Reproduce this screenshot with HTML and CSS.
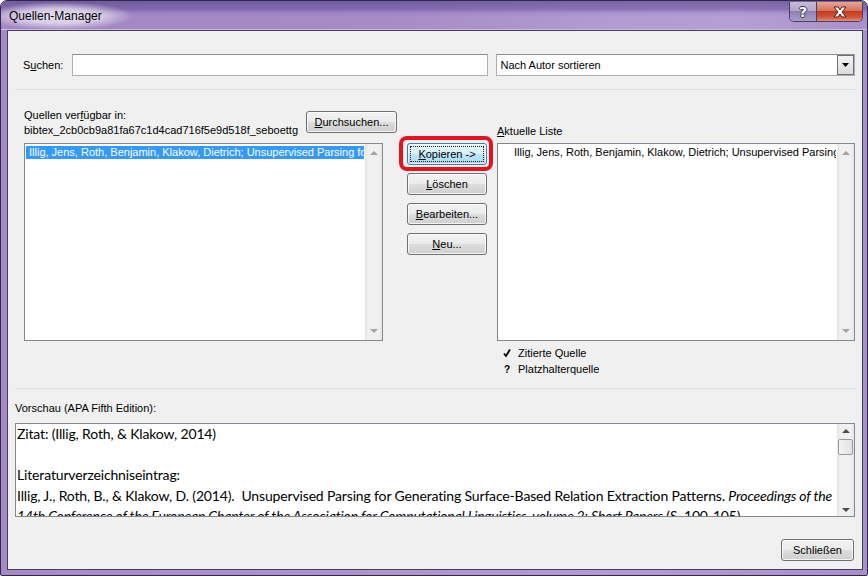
FILE: index.html
```html
<!DOCTYPE html>
<html lang="de">
<head>
<meta charset="utf-8">
<title>Quellen-Manager</title>
<link rel="stylesheet" href="styles.css">
</head>
<body>
<div class="window">
  <div class="titlebar">
    <span class="title">Quellen-Manager</span>
    <div class="caption">
      <div class="cap help"><span>?</span></div>
      <div class="cap close">
        <svg width="16" height="12" viewBox="0 0 16 12"><path d="M2 1 H6 L8 4 L10 1 H14 L10 6 L14 11 H10 L8 8 L6 11 H2 L6 6 Z" fill="#fff" stroke="#5a1a14" stroke-width="1"/></svg>
      </div>
    </div>
  </div>
  <div class="client">
    <div class="search-row">
      <span class="search-label">S<u>u</u>chen:</span>
      <div class="textbox"></div>
      <div class="combo">
        <span class="combo-text">Nach Autor sortieren</span>
        <span class="combo-btn"><svg width="7" height="4" viewBox="0 0 7 4"><path d="M0 0 H7 L3.5 4 Z" fill="#000"/></svg></span>
      </div>
    </div>
    <div class="sep sep-top"></div>
    <div class="main">
      <div class="col-left">
        <div class="left-head">
          <div class="head-text">
            <div class="line">Quellen ver<u>f</u>ügbar in:</div>
            <div class="line">bibtex_2cb0cb9a81fa67c1d4cad716f5e9d518f_seboettg</div>
          </div>
          <div class="btn btn-browse"><u>D</u>urchsuchen...</div>
        </div>
        <div class="listbox">
          <div class="list-items">
            <div class="item selected">Illig, Jens, Roth, Benjamin, Klakow, Dietrich; Unsupervised Parsing for Generating Surface-Based Relation Extraction Patterns (2014)</div>
          </div>
          <div class="vscroll disabled">
            <span class="arr up"></span>
            <span class="arr down"></span>
          </div>
        </div>
      </div>
      <div class="col-mid">
        <div class="highlight-wrap">
          <div class="btn btn-focus"><span class="focus-rect"><u>K</u>opieren -&gt;</span></div>
          <span class="red-ring"></span>
        </div>
        <div class="btn"><u>L</u>öschen</div>
        <div class="btn"><u>B</u>earbeiten...</div>
        <div class="btn"><u>N</u>eu...</div>
      </div>
      <div class="col-right">
        <div class="right-label"><u>A</u>ktuelle Liste</div>
        <div class="listbox">
          <div class="list-items">
            <div class="item indented">Illig, Jens, Roth, Benjamin, Klakow, Dietrich; Unsupervised Parsing for Generating Surface-Based Relation Extraction Patterns (2014)</div>
          </div>
          <div class="vscroll disabled">
            <span class="arr up"></span>
            <span class="arr down"></span>
          </div>
        </div>
        <div class="legend">
          <div class="legend-row">
            <span class="legend-icon"><svg width="8" height="8" viewBox="0 0 8 8"><path d="M1 4.5 L3 7 L7 0.5" fill="none" stroke="#000" stroke-width="1.8"/></svg></span>
            <span>Zitierte Quelle</span>
          </div>
          <div class="legend-row">
            <span class="legend-icon q">?</span>
            <span>Platzhalterquelle</span>
          </div>
        </div>
      </div>
    </div>
    <div class="sep"></div>
    <div class="preview-label">Vorschau (APA Fifth Edition):</div>
    <div class="preview">
      <div class="preview-text">
        <div class="pline">Zitat: (Illig, Roth, &amp; Klakow, 2014)</div>
        <div class="pline">&nbsp;</div>
        <div class="pline">Literaturverzeichniseintrag:</div>
        <div class="pline">Illig, J., Roth, B., &amp; Klakow, D. (2014).&nbsp; Unsupervised Parsing for Generating Surface-Based Relation Extraction Patterns. <i>Proceedings of the</i></div>
        <div class="pline"><i>14th Conference of the European Chapter of the Association for Computational Linguistics, volume 2: Short Papers</i> (S. 100-105).</div>
      </div>
      <div class="vscroll active">
        <span class="arr up"></span>
        <span class="thumb"></span>
        <span class="arr down"></span>
      </div>
    </div>
    <div class="footer">
      <div class="btn btn-close">Schließen</div>
    </div>
  </div>
</div>
</body>
</html>
```

FILE: styles.css
```css
* { box-sizing: border-box; }
html, body { margin: 0; padding: 0; }
body {
  width: 868px;
  height: 576px;
  overflow: hidden;
  font-family: "Liberation Sans", Arial, sans-serif;
  font-size: 11px;
  color: #000;
  background: #fff;
}
u { text-decoration: underline; text-underline-offset: 1px; }

.window {
  width: 868px;
  height: 576px;
  border: 1px solid #2f2945;
  border-radius: 7px 7px 2px 2px;
  display: flex;
  flex-direction: column;
  background:
    linear-gradient(to right, #a68ac6 0%, #ad93cd 40%, #b49bd3 70%, #a990cb 100%);
  overflow: hidden;
}

.titlebar {
  height: 29px;
  flex-shrink: 0;
  display: flex;
  align-items: flex-start;
  justify-content: space-between;
  background:
    radial-gradient(ellipse 75px 14px at 58px 15px, rgba(236,232,244,0.95) 0%, rgba(236,232,244,0.7) 55%, rgba(236,232,244,0) 100%),
    linear-gradient(to bottom, rgba(70,55,130,0.55) 0px, rgba(85,65,140,0.45) 8px, rgba(120,95,170,0.15) 12px, rgba(255,255,255,0) 16px),
    linear-gradient(to right, #a386c4 0%, #a78bc6 45%, #b39ad2 70%, #b69fd4 85%, #a891ca 100%);
  box-shadow: inset 0 -1px 0 #c9b8e0;
}
.title {
  font-size: 12px;
  line-height: 15px;
  margin: 8px 0 0 8px;
  color: #000;
}
.caption {
  display: flex;
  margin-right: 4px;
  margin-top: 1px;
  height: 20px;
  border: 1px solid #4a4060;
  border-top: none;
  border-radius: 0 0 5px 5px;
  overflow: hidden;
}
.cap {
  height: 19px;
  display: flex;
  align-items: center;
  justify-content: center;
}
.help {
  width: 27px;
  border-right: 1px solid #4a4060;
  background: linear-gradient(to bottom, #c6bcd8 0%, #b2a6cc 45%, #8f80b4 50%, #a99cc8 100%);
}
.help span {
  font-family: "DejaVu Sans", sans-serif;
  font-weight: bold;
  font-size: 14px;
  color: #fff;
  text-shadow: 1px 0 0 #3c3450, -1px 0 0 #3c3450, 0 1px 0 #3c3450, 0 -1px 0 #3c3450;
  line-height: 14px;
}
.close {
  width: 45px;
  background: linear-gradient(to bottom, #e8a393 0%, #d7735f 45%, #c23b21 50%, #d2563a 80%, #e0907a 100%);
}

.client {
  flex: 1;
  min-height: 0;
  margin: 0 4px 5px 6px;
  border: 1px solid #45405a;
  background: #f0f0f0;
  padding: 0 7px;
  display: flex;
  flex-direction: column;
  overflow: hidden;
}

.search-row {
  margin-top: 23px;
  height: 22px;
  flex-shrink: 0;
  display: flex;
  align-items: center;
  padding-left: 8px;
}
.search-label { width: 49px; line-height: 14px; }
.textbox {
  width: 417px;
  height: 22px;
  background: #fff;
  border: 1px solid #abadb3;
  border-top-color: #8e8f8f;
}
.combo {
  margin-left: 8px;
  width: 359px;
  height: 22px;
  background: #fff;
  border: 1px solid #abadb3;
  border-top-color: #8e8f8f;
  display: flex;
  align-items: center;
  justify-content: space-between;
}
.combo-text { padding-left: 3px; line-height: 14px; }
.combo-btn {
  width: 17px;
  height: 20px;
  background: linear-gradient(to bottom, #f4f4f4, #dcdcdc);
  border: 1px solid #707070;
  display: flex;
  align-items: center;
  justify-content: center;
}

.sep {
  height: 1px;
  background: #d5dfe5;
  flex-shrink: 0;
}
.sep-top { margin-top: 13px; }

.main {
  height: 298px;
  flex-shrink: 0;
  padding: 18px 0 0 9px;
  display: flex;
  align-items: flex-start;
}
.col-left { width: 359px; }
.left-head {
  width: 373px;
  height: 35px;
  display: flex;
  justify-content: space-between;
  align-items: flex-start;
}
.head-text .line { line-height: 15px; white-space: nowrap; }
.btn-browse { width: 91px; height: 22px; margin-top: 3px; }

.listbox {
  height: 198px;
  background: #fff;
  border: 1px solid #828790;
  display: flex;
}
.list-items {
  flex: 1;
  min-width: 0;
  overflow: hidden;
  padding: 2px 1px 0 1px;
}
.item {
  height: 13px;
  line-height: 13px;
  white-space: nowrap;
  overflow: hidden;
  padding-left: 3px;
}
.item.selected { background: #3399ff; color: #fff; }
.item.indented { padding-left: 15px; }

.vscroll {
  width: 17px;
  flex-shrink: 0;
  background: linear-gradient(to right, #e3e3e3 0, #f0f0f0 3px, #f0f0f0 14px, #e6e6e6 17px);
  display: flex;
  flex-direction: column;
  justify-content: space-between;
  align-items: center;
  padding: 7px 0 7px;
}
.arr {
  width: 0;
  height: 0;
  border-left: 4px solid transparent;
  border-right: 4px solid transparent;
}
.disabled .arr.up { border-bottom: 4px solid #a3a3a3; }
.disabled .arr.down { border-top: 4px solid #a3a3a3; }
.active .arr.up { border-bottom: 4px solid #4d4d4d; margin-top: 1px; }
.active .arr.down { border-top: 4px solid #4d4d4d; margin-top: auto; }
.active { justify-content: flex-start; }
.thumb {
  width: 15px;
  height: 16px;
  margin-top: 6px;
  border: 1px solid #9a9a9a;
  border-radius: 2px;
  background: linear-gradient(to right, #f3f3f3, #e2e2e2);
}

.col-mid {
  width: 81px;
  margin-left: 24px;
  padding-top: 35px;
  display: flex;
  flex-direction: column;
  gap: 8px;
}
.btn {
  height: 22px;
  border: 1px solid #707070;
  border-radius: 3px;
  background: linear-gradient(to bottom, #f2f2f2 0%, #ebebeb 48%, #dddddd 52%, #cfcfcf 100%);
  box-shadow: inset 0 0 0 1px rgba(255,255,255,0.75);
  display: flex;
  align-items: center;
  justify-content: center;
  line-height: 14px;
  white-space: nowrap;
}
.highlight-wrap { position: relative; }
.btn-focus {
  border-color: #3c7fb1;
  background: linear-gradient(to bottom, #eaf6fd 0%, #d9f0fc 48%, #bee6fd 52%, #a7d9f5 100%);
  padding: 2px;
}
.focus-rect {
  flex: 1;
  align-self: stretch;
  border: 1px dotted #222;
  display: flex;
  align-items: center;
  justify-content: center;
}
.red-ring {
  position: absolute;
  left: -8px;
  right: -6px;
  top: -7px;
  bottom: -6px;
  border: 4px solid #e4131d;
  border-radius: 8px;
  pointer-events: none;
}

.col-right {
  width: 358px;
  margin-left: 10px;
  padding-top: 16px;
}
.right-label { line-height: 15px; margin-bottom: 4px; }
.legend { margin-top: 4px; padding-left: 6px; }
.legend-row { display: flex; align-items: center; height: 16px; }
.legend-icon {
  width: 15px;
  display: flex;
  align-items: center;
}
.legend-icon.q { font-weight: bold; font-size: 10px; padding-left: 1px; }

.preview-label { margin-top: 12px; line-height: 15px; flex-shrink: 0; }
.preview {
  margin-top: 7px;
  height: 94px;
  flex-shrink: 0;
  background: #fff;
  border: 1px solid #828790;
  display: flex;
}
.preview-text {
  flex: 1;
  min-width: 0;
  overflow: hidden;
  padding-left: 1px;
  font-family: Lato, "Open Sans", sans-serif;
  font-size: 14px;
  letter-spacing: -0.15px;
  color: #000;
}
.pline { line-height: 20.6px; white-space: nowrap; }
.preview .vscroll { padding: 4px 0 4px; }

.footer {
  margin-top: 22px;
  flex-shrink: 0;
  display: flex;
  justify-content: flex-end;
  padding-right: 1px;
}
.btn-close { width: 73px; }
```
